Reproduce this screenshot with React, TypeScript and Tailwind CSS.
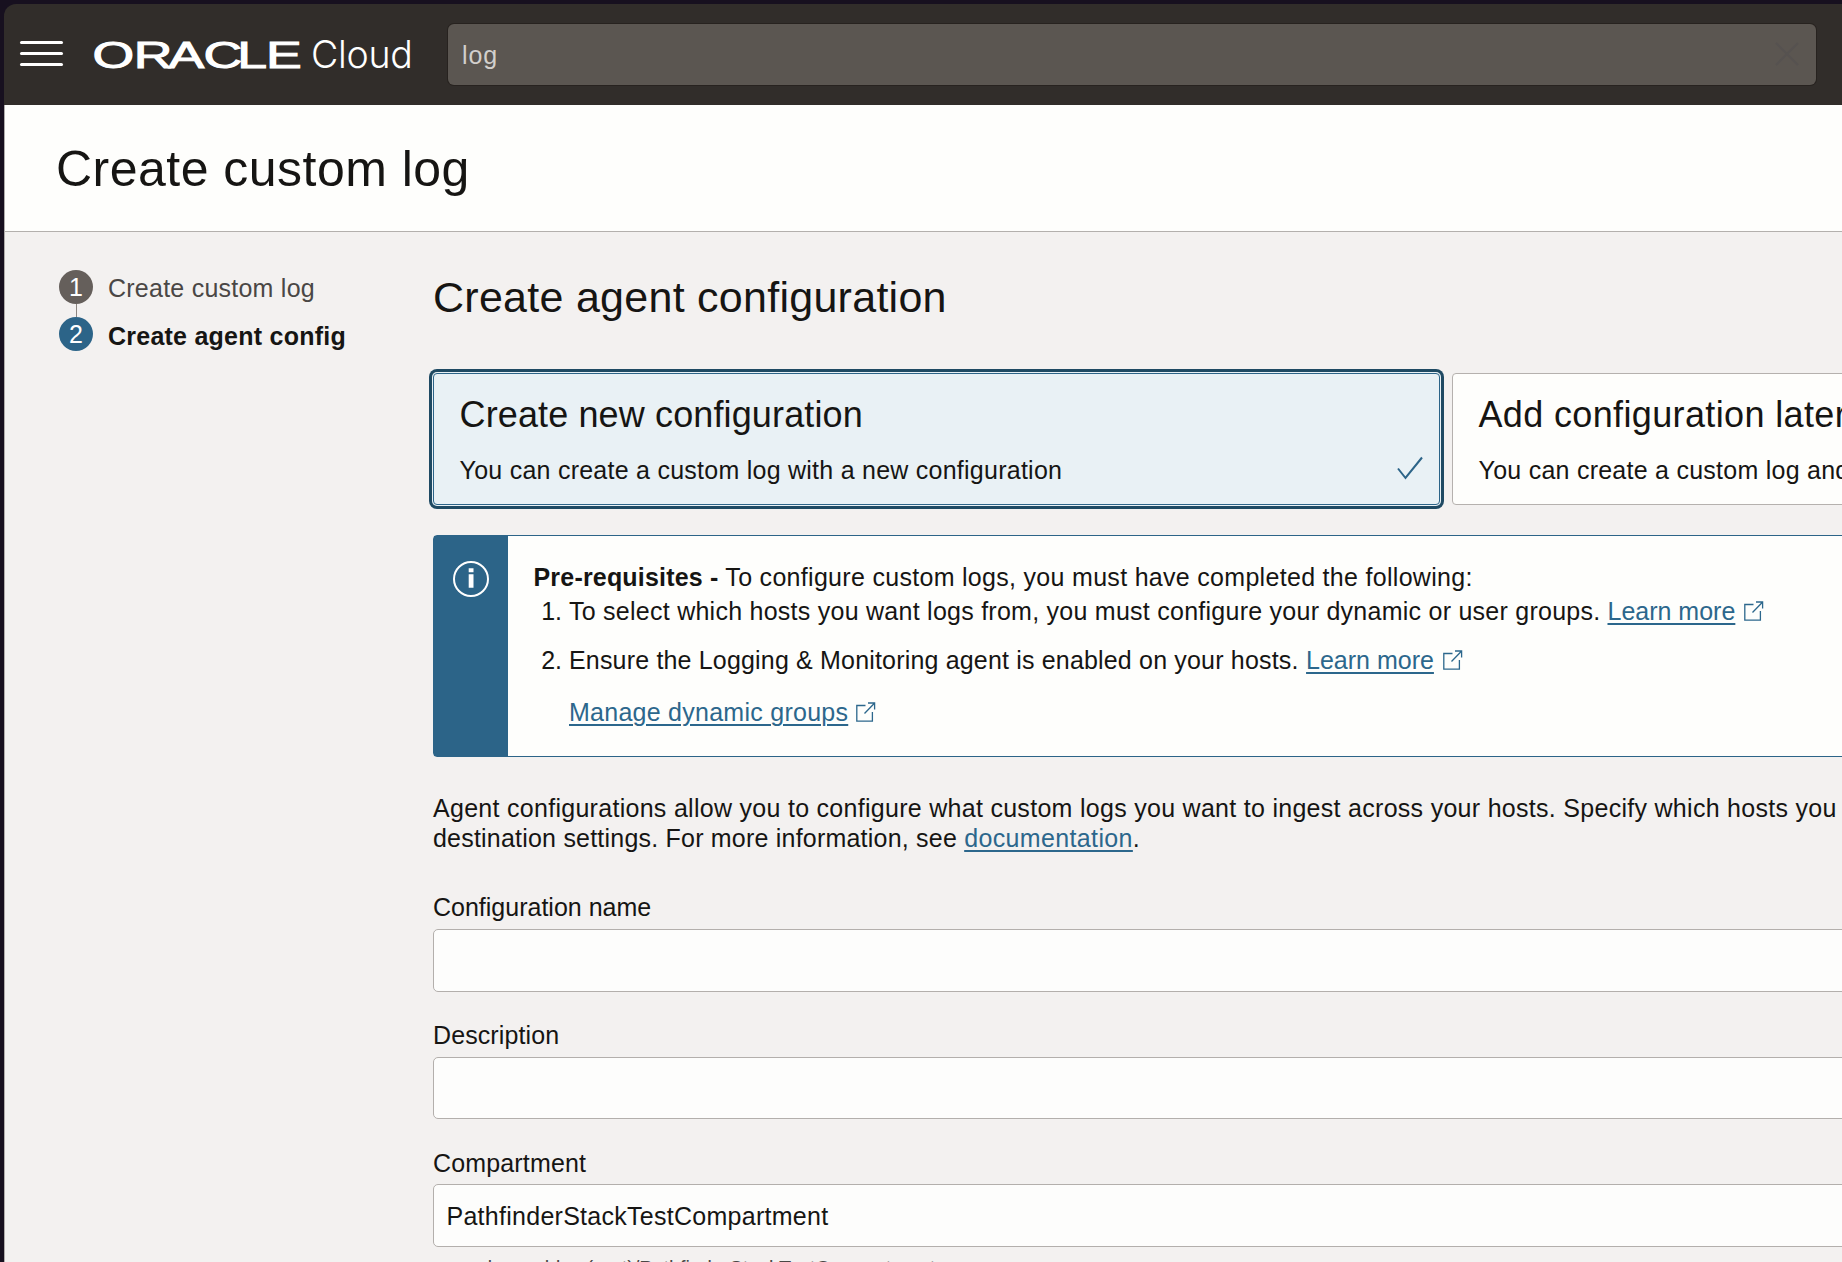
import React from "react";

function ExternalIcon({ className = "" }: { className?: string }) {
  return (
    <svg width="20" height="20" viewBox="0 0 20 20" fill="none" stroke="#2c678c" strokeWidth="1.3" className={className}>
      <path d="M9.5 3.5H.8v15.6h15.6V10" />
      <path d="M8.5 11.5 18.4 1.2M12 1H18.6V7.5" />
    </svg>
  );
}

function Link({ children, className = "" }: { children: React.ReactNode; className?: string }) {
  return (
    <a href="#" className={`text-[#2c678c] underline decoration-2 underline-offset-[3px] ${className}`}>
      {children}
    </a>
  );
}

function Header() {
  return (
    <header className="flex h-[101px] items-start rounded-tl-xl bg-[#312d2a]">
      <button aria-label="Menu" className="mt-[37px] ml-4 flex w-[43px] shrink-0 flex-col gap-2">
        <span className="h-[3px] rounded-full bg-white" />
        <span className="h-[3px] rounded-full bg-white" />
        <span className="h-[3px] rounded-full bg-white" />
      </button>
      <div className="ml-[27px] flex h-[80px] w-[358px] shrink-0">
        <svg width="216" height="80" viewBox="0 0 216 80" className="shrink-0 overflow-visible">
          <text
            transform="scale(1.45 1)"
            x="1.7 30.1 54.2 78.3 101.6 121.4"
            y="64.3"
            fill="#fff"
            stroke="#fff"
            strokeWidth="1"
            className="font-['Liberation_Sans'] text-[37px]"
          >
            ORACLE
          </text>
        </svg>
        <span className="mt-[27px] ml-[5px] font-['Inter'] text-[37.5px] leading-[48px] font-light tracking-[-0.3px] text-white">Cloud</span>
      </div>
      <div className="mt-5 flex h-[61px] w-[1368px] shrink-0 items-center justify-between rounded-md bg-[#5b5651] pr-[17px] pl-[14px] shadow-[0_0_0_1px_#27221f]">
        <span className="tracking-[0.9px] text-[#d2cfcc]">log</span>
        <svg width="24" height="24" viewBox="0 0 24 24" stroke="#565250" strokeWidth="2" className="mb-0.5">
          <path d="M1 1l22 22M23 1L1 23" />
        </svg>
      </div>
    </header>
  );
}

function Step({ n, label, active }: { n: number; label: string; active?: boolean }) {
  return (
    <li className="flex h-[34px] items-center">
      <span
        className={`flex size-[34px] items-center justify-center rounded-full leading-[34px] text-white ${
          active ? "bg-[#2c6488]" : "bg-[#655f5b]"
        }`}
      >
        {n}
      </span>
      <span
        className={`ml-[15px] tracking-[0.24px] ${
          active ? "mt-[3px] font-bold text-[#161513]" : "mt-px text-[#4a4745]"
        }`}
      >
        {label}
      </span>
    </li>
  );
}

function Field({ label, value, tracking }: { label: string; value?: string; tracking: string }) {
  return (
    <div className="h-[127.5px]">
      <div className={tracking}>{label}</div>
      <div className="mt-[7px] flex h-[62.5px] w-[1500px] items-center rounded-[5px] border border-[#b3afac] bg-[#fdfdfc] pt-px pl-[12.5px] tracking-[0.27px]">
        {value}
      </div>
    </div>
  );
}

export default function App() {
  return (
    <div className="h-[1262px] w-[1842px] overflow-hidden bg-[#17101f] pt-1 pl-1 font-['Liberation_Sans',Arial,sans-serif] text-[25px] leading-[30px] whitespace-nowrap text-[#161513]">
      <Header />
      <div className="h-[1160px] border-l border-[#b0adab] bg-[#f3f1f0]">
        <div className="flex h-[127px] items-center border-b border-[#b3b0ad] bg-[#fefefc] pl-[51px]">
          <h1 className="mt-0.5 text-[50px] leading-[60px] tracking-[0.48px]">Create custom log</h1>
        </div>
        <div className="flex">
          <ol className="flex w-[428px] shrink-0 flex-col pt-[38px] pl-[54px]">
            <Step n={1} label="Create custom log" />
            <li className="ml-[17px] h-[13px] w-px bg-[#8b8580]" />
            <Step n={2} label="Create agent config" active />
          </ol>
          <main className="w-[1500px] shrink-0">
            <h2 className="mt-[39px] text-[43px] leading-[52px] tracking-[0.27px]">Create agent configuration</h2>
            <div className="mt-[50px] flex gap-3">
              <div className="flex h-[132px] w-[1007px] shrink-0 justify-between rounded-[4px] border border-[#2c6488] bg-[#e9f1f5] shadow-[0_0_0_1px_#e9f1f5,0_0_0_4px_#1f4a63]">
                <div className="pt-[19px] pl-[25.5px]">
                  <div className="text-[36px] leading-[44px] tracking-[0.13px]">Create new configuration</div>
                  <div className="mt-[18px] tracking-[0.25px]">You can create a custom log with a new configuration</div>
                </div>
                <svg width="26" height="24" viewBox="0 0 26 24" fill="none" stroke="#2c6488" strokeWidth="2" className="mt-[82px] mr-[16px]">
                  <path d="M1 12.5 8.5 22 25 1.5" />
                </svg>
              </div>
              <div className="h-[132px] w-[1007px] shrink-0 rounded-[4px] border border-[#b5b1ae] bg-[#fefefc] pt-[19px] pl-[25.5px]">
                <div className="text-[36px] leading-[44px] tracking-[0.36px]">Add configuration later</div>
                <div className="mt-[18px] tracking-[0.25px]">You can create a custom log and add configuration later</div>
              </div>
            </div>

            <section className="mt-[30px] flex h-[222px] rounded-[4px] border border-[#2c6488] bg-[#fefefc]">
              <div className="w-[74px] shrink-0 bg-[#2c6488] pt-[25px] pl-[19px]">
                <svg width="36" height="36" viewBox="0 0 36 36">
                  <circle cx="18" cy="18" r="17" fill="none" stroke="#fff" strokeWidth="2" />
                  <path d="M15.7 7.2h4.8v4h-4.8zM15.7 13.2h4.8v13.6h-4.8z" fill="#fff" />
                </svg>
              </div>
              <div className="pt-[26px] pl-[25.5px]">
                <p className="tracking-[0.3px]">
                  <b className="tracking-[0.19px]">Pre-requisites -</b> To configure custom logs, you must have completed the following:
                </p>
                <ol>
                  <li className="mt-1 flex">
                    <span className="mr-[7px] w-[28.5px] text-right">1.</span>
                    <span className="tracking-[0.255px]">To select which hosts you want logs from, you must configure your dynamic or user groups.</span>
                    <Link className="ml-[7px]">Learn more</Link>
                    <ExternalIcon className="mt-[5px] ml-[9px]" />
                  </li>
                  <li className="mt-[19px] flex">
                    <span className="mr-[7px] w-[28.5px] text-right">2.</span>
                    <span className="tracking-[0.175px]">Ensure the Logging &amp; Monitoring agent is enabled on your hosts.</span>
                    <Link className="ml-[7.5px]">Learn more</Link>
                    <ExternalIcon className="mt-[5px] ml-[9px]" />
                  </li>
                </ol>
                <div className="mt-[22px] ml-[35.5px] flex">
                  <Link className="tracking-[0.26px]">Manage dynamic groups</Link>
                  <ExternalIcon className="mt-[5px] ml-[8px]" />
                </div>
              </div>
            </section>

            <p className="mt-[36px] tracking-[0.286px]">
              Agent configurations allow you to configure what custom logs you want to ingest across your hosts. Specify which hosts you
              <br />
              <span className="tracking-[0.21px]">
                destination settings. For more information, see <Link className="tracking-[0.36px]">documentation</Link>.
              </span>
            </p>

            <div className="mt-[39px]">
              <Field label="Configuration name" tracking="tracking-[0px]" />
              <Field label="Description" tracking="tracking-[0.1px]" />
              <Field label="Compartment" tracking="tracking-[0.15px] relative top-px" value="PathfinderStackTestCompartment" />
            </div>
            <div className="-mt-[18.5px] pl-[5px] text-[20px] leading-[24px] tracking-[-0.1px] text-[#4a4745]">paasdevconldev (root)/PathfinderStackTestCompartment</div>
          </main>
        </div>
      </div>
    </div>
  );
}
